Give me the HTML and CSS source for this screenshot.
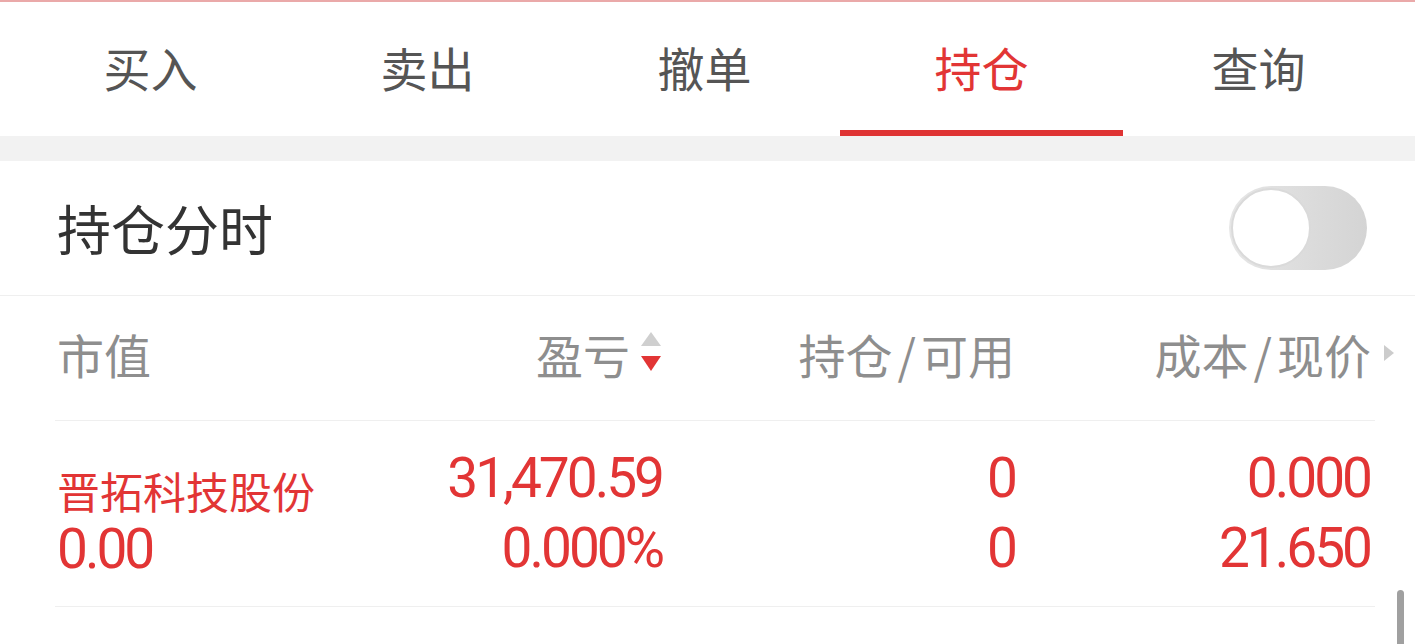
FILE: index.html
```html
<!DOCTYPE html>
<html lang="zh-CN">
<head>
<meta charset="utf-8">
<title>持仓</title>
<link rel="stylesheet" href="styles.css">
</head>
<body>
<div class="app">
  <div class="topline"></div>
  <nav class="tabs">
    <div class="tab">买入</div>
    <div class="tab">卖出</div>
    <div class="tab">撤单</div>
    <div class="tab active">持仓</div>
    <div class="tab">查询</div>
  </nav>
  <div class="band"></div>
  <section class="switch-row">
    <div class="switch-title">持仓分时</div>
    <div class="toggle"><div class="knob"></div></div>
  </section>
  <section class="table">
    <div class="thead">
      <div class="hcell c1">市值</div>
      <div class="hcell c2">盈亏<svg class="sort" width="22" height="44" viewBox="0 0 22 44"><polygon points="11,1 21,15 1,15" fill="#cfcfcf"/><polygon points="1,25 21,25 11,40" fill="#e23535"/></svg></div>
      <div class="hcell c3">持仓<span class="slash">/</span>可用</div>
      <div class="hcell c4">成本<span class="slash">/</span>现价<svg class="more" width="12" height="18" viewBox="0 0 12 18"><polygon points="1,1 11,9 1,17" fill="#cccccc"/></svg></div>
    </div>
    <div class="trow">
      <div class="cell c1">
        <div class="name">晋拓科技股份</div>
        <div class="num sub">0.00</div>
      </div>
      <div class="cell c2">
        <div class="num">31,470.59</div>
        <div class="num">0.000%</div>
      </div>
      <div class="cell c3">
        <div class="num">0</div>
        <div class="num">0</div>
      </div>
      <div class="cell c4">
        <div class="num">0.000</div>
        <div class="num">21.650</div>
      </div>
    </div>
  </section>
  <div class="scrollbar"></div>
</div>
</body>
</html>
```
FILE: styles.css
```css
html, body {
  margin: 0;
  padding: 0;
  background: #ffffff;
}
body {
  font-family: "Noto Sans CJK SC", "Noto Sans", sans-serif;
  width: 1415px;
  height: 644px;
  overflow: hidden;
}
.app {
  position: relative;
  width: 1415px;
  height: 644px;
  overflow: hidden;
}
.topline {
  height: 2px;
  background: #eaa9a9;
}
.tabs {
  display: flex;
  height: 134px;
  padding-left: 12px;
  background: #fff;
}
.tab {
  position: relative;
  width: 277px;
  text-align: center;
  font-size: 47px;
  line-height: 130px;
  height: 134px;
  color: #555555;
}
.tab.active {
  color: #e23535;
}
.tab.active::after {
  content: "";
  position: absolute;
  left: -3px;
  right: -3px;
  bottom: 0;
  height: 6px;
  background: #df3434;
}
.band {
  height: 25px;
  background: #f2f2f2;
}
.switch-row {
  display: flex;
  align-items: center;
  justify-content: space-between;
  height: 134px;
  padding: 0 48px 0 57px;
  border-bottom: 1px solid #efefef;
}
.switch-title {
  font-size: 54px;
  color: #333333;
  line-height: 1;
}
.toggle {
  width: 138px;
  height: 84px;
  border-radius: 42px;
  background: linear-gradient(90deg, #e6e6e6 0%, #d4d4d4 100%);
  box-sizing: border-box;
  padding: 2px;
  display: flex;
  align-items: center;
}
.knob {
  width: 80px;
  height: 80px;
  box-sizing: border-box;
  border-radius: 50%;
  background: #fff;
  border: 2px solid #dadada;
}
.table {
  margin: 0 40px 0 55px;
}
.thead, .trow {
  display: grid;
  grid-template-columns: 302px 305px 353px 355px;
}
.thead {
  height: 124px;
  align-items: center;
  border-bottom: 1px solid #efefef;
}
.hcell {
  font-size: 47px;
  color: #8e8e8e;
  line-height: 1;
  padding-bottom: 10px;
}
.hcell.c1 {
  padding-left: 2px;
}
.hcell.c2, .hcell.c3, .hcell.c4 {
  display: flex;
  justify-content: flex-end;
  align-items: center;
}
.slash {
  margin: 0 5px;
}
.sort {
  margin-left: 10px;
}
.hcell.c4 {
  margin-right: -25px;
}
.more {
  margin-left: 12px;
}
.trow {
  height: 186px;
  border-bottom: 1px solid #efefef;
  box-sizing: border-box;
  padding-top: 22px;
  color: #e23535;
}
.cell {
  display: flex;
  flex-direction: column;
}
.cell.c1 {
  padding-left: 2px;
  padding-top: 14px;
}
.cell.c2, .cell.c3, .cell.c4 {
  align-items: flex-end;
}
.num {
  font-family: "Roboto", sans-serif;
  font-weight: 400;
  font-size: 55px;
  letter-spacing: -3px;
  line-height: 70px;
}
.name {
  font-size: 43px;
  line-height: 66px;
}
.num.sub {
  line-height: 52px;
}
.scrollbar {
  position: absolute;
  left: 1397px;
  top: 590px;
  width: 7px;
  height: 60px;
  border-radius: 4px;
  background: #a0a0a0;
}
```
